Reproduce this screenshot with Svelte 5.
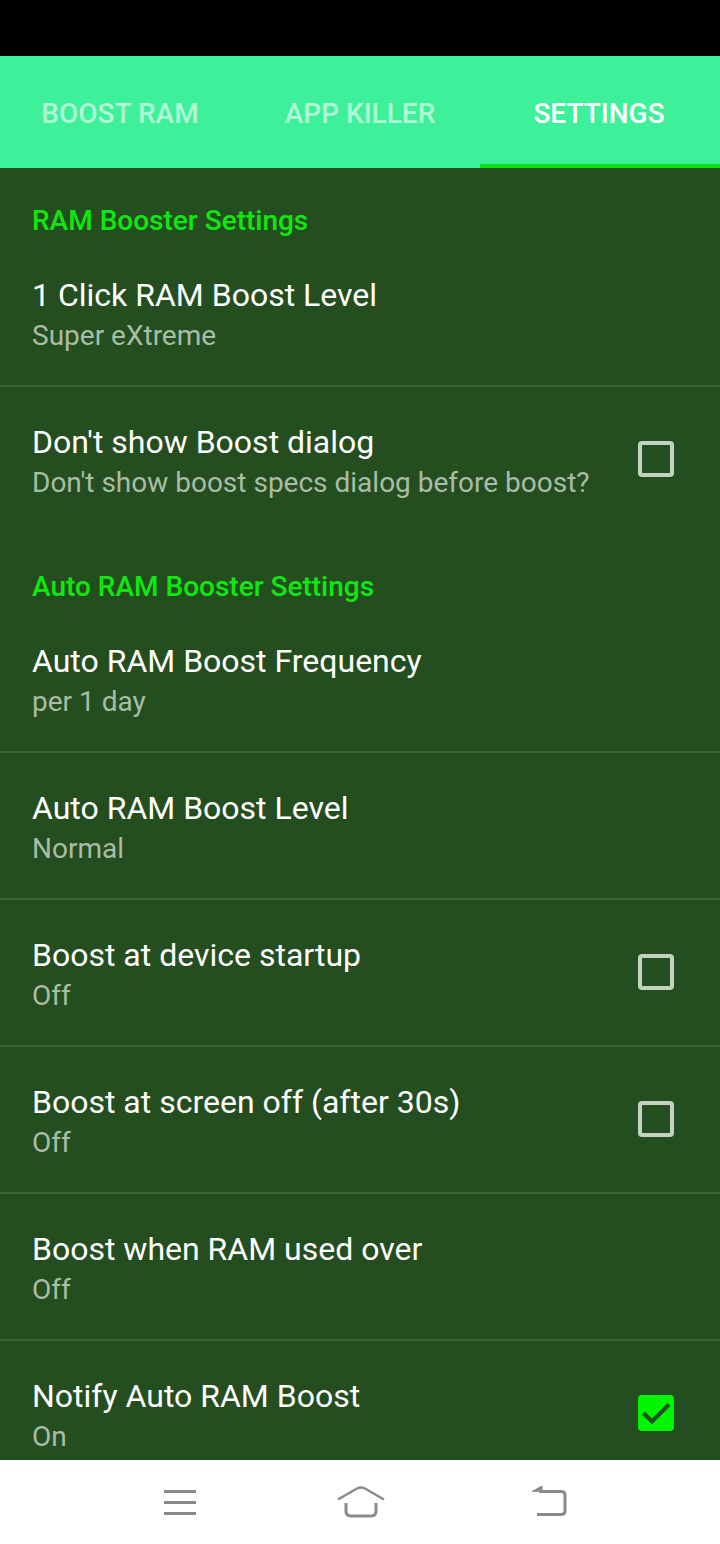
<script>
  const tabs = ['Boost RAM', 'App Killer', 'Settings'];
  const active = 2;

  const sections = [
    {
      title: 'RAM Booster Settings',
      rows: [
        { title: '1 Click RAM Boost Level', sub: 'Super eXtreme' },
        { title: "Don't show Boost dialog", sub: "Don't show boost specs dialog before boost?", check: false }
      ]
    },
    {
      title: 'Auto RAM Booster Settings',
      rows: [
        { title: 'Auto RAM Boost Frequency', sub: 'per 1 day' },
        { title: 'Auto RAM Boost Level', sub: 'Normal' },
        { title: 'Boost at device startup', sub: 'Off', check: false },
        { title: 'Boost at screen off (after 30s)', sub: 'Off', check: false },
        { title: 'Boost when RAM used over', sub: 'Off' },
        { title: 'Notify Auto RAM Boost', sub: 'On', check: true }
      ]
    }
  ];
</script>

<div class="screen">
  <div class="status"></div>

  <div class="tabs">
    {#each tabs as tab, i}
      <div class="tab" class:active={i === active}>{tab}</div>
    {/each}
  </div>

  <div class="list">
    {#each sections as section}
      <div class="section-title">{section.title}</div>
      <div class="rows">
        {#each section.rows as row}
          <div class="row">
            <div class="text">
              <div class="title">{row.title}</div>
              <div class="sub">{row.sub}</div>
            </div>
            {#if row.check === true}
              <div class="box on">
                <svg viewBox="0 0 36 36" width="36" height="36">
                  <path d="M5.500 18 L14 26.500 L31 9.500" fill="none" stroke="#1f4f1f" stroke-width="4" />
                </svg>
              </div>
            {:else if row.check === false}
              <div class="box"></div>
            {/if}
          </div>
        {/each}
      </div>
    {/each}
  </div>

  <div class="nav">
    <svg viewBox="0 0 36 30" width="36" height="30">
      <path d="M2 4.500H34M2 15.500H34M2 26.500H34" stroke="#8a8a8a" stroke-width="3" fill="none" />
    </svg>
    <svg class="home" viewBox="0 0 50 34" width="50" height="34">
      <path d="M2 14.500 L21 3.500 Q25 1.500 29 3.500 L48 14.500" stroke="#8a8a8a" stroke-width="2.500" fill="none" />
      <path d="M10 18 V26 Q10 31 15 31 H35 Q40 31 40 26 V18" stroke="#8a8a8a" stroke-width="3" fill="none" />
    </svg>
    <svg viewBox="0 0 36 34" width="36" height="34">
      <path d="M1 6.500 L11 1 V6 Z" fill="#8a8a8a" stroke="#8a8a8a" stroke-width="1" />
      <path d="M8 6.500 H30 Q34 6.500 34 10 V26 Q34 29.500 30 29.500 H6" stroke="#8a8a8a" stroke-width="3" fill="none" />
    </svg>
  </div>
</div>

<style>
  :global(body) {
    margin: 0;
  }
  .screen {
    width: 720px;
    height: 1544px;
    display: flex;
    flex-direction: column;
    overflow: hidden;
    font-family: Roboto, sans-serif;
    background: #244d20;
  }
  .status {
    height: 56px;
    flex: none;
    background: #000;
  }
  .tabs {
    display: grid;
    grid-template-columns: repeat(3, 1fr);
    height: 112px;
    flex: none;
    background: #3ff09b;
  }
  .tab {
    display: flex;
    align-items: center;
    justify-content: center;
    box-sizing: border-box;
    padding-top: 2px;
    font-size: 28px;
    font-weight: 500;
    text-transform: uppercase;
    color: rgba(255, 255, 255, 0.6);
  }
  .tab.active {
    color: #fff;
    border-bottom: 4px solid #10e010;
    padding: 6px 2px 0 0;
  }
  .list {
    flex: 1;
    min-height: 0;
    overflow: hidden;
  }
  .section-title {
    height: 72px;
    box-sizing: border-box;
    padding: 33px 32px 0;
    font-size: 28px;
    line-height: 40px;
    font-weight: 500;
    color: #0fe80f;
  }
  .rows + .section-title {
    height: 73px;
    padding-top: 34px;
  }
  .row {
    display: flex;
    align-items: center;
    justify-content: space-between;
    box-sizing: border-box;
    height: 147px;
    padding: 0 46px 0 32px;
    border-bottom: 2px solid #3f6239;
  }
  .row:last-child {
    border-bottom: none;
    height: 146px;
  }
  .text {
    padding-top: 5px;
  }
  .title {
    font-size: 32px;
    line-height: 40px;
    color: #fff;
  }
  .sub {
    margin-top: 1px;
    font-size: 28px;
    line-height: 40px;
    color: #a9bda6;
  }
  .box {
    box-sizing: border-box;
    width: 36px;
    height: 36px;
    margin-bottom: 2px;
    border: 4px solid #c3d1c0;
    border-radius: 4px;
  }
  .box.on {
    border: none;
    background: #00f500;
  }
  .box svg {
    display: block;
  }
  .nav {
    height: 84px;
    flex: none;
    display: flex;
    align-items: center;
    justify-content: space-between;
    box-sizing: border-box;
    padding: 0 153px 0 162px;
    background: #fff;
  }
  .home {
    margin-right: 8px;
  }
</style>
